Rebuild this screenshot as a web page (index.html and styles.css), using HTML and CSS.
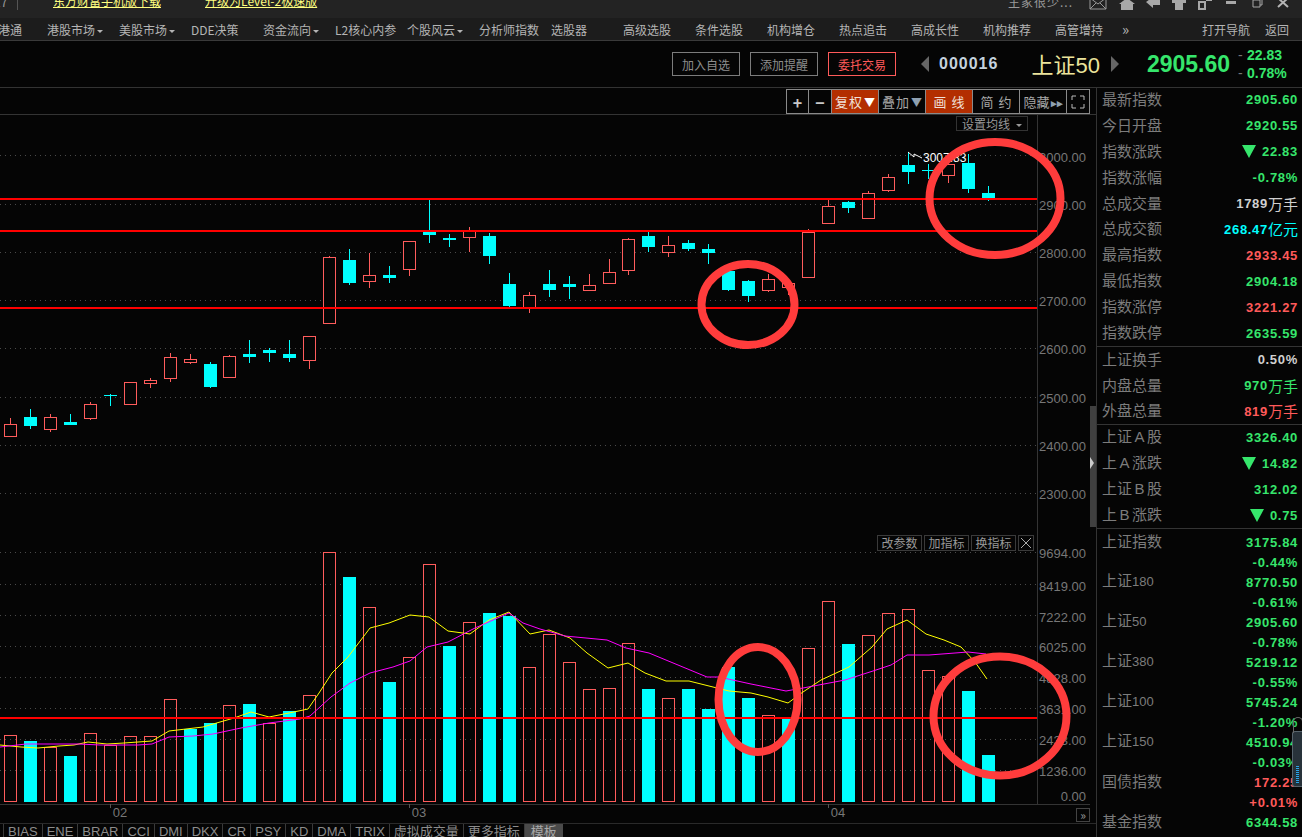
FILE: index.html
```html
<!DOCTYPE html>
<html lang="zh-CN">
<head>
    <meta charset="UTF-8">
    <title>上证50</title>
    <link rel="stylesheet" href="styles.css">
</head>
<body>
    <div class="topbar">
        <span class="topbar-stub">17</span>
        <a class="promo promo-first" href="#">东方财富手机版下载</a>
        <a class="promo promo-second" href="#">升级为Level-2极速版</a>
        <span class="user-name">主家很少...</span>
        <div class="win-icons">
            <svg class="win-icon win-icon-mail" viewBox="0 0 26 12"><path d="M5 0h16v11H5zM5 0l8 6 8-6M5 11l6-6M21 11l-6-6" fill="none" stroke="#9a9a9a"/></svg>
            <svg class="win-icon" viewBox="0 0 26 12"><path d="M13 0l8 6h-2v6H7V6H5z" fill="#a8a8a8"/></svg>
            <svg class="win-icon" viewBox="0 0 26 12"><path d="M6 4l7-5v3h7v5h-7v3z" fill="#a8a8a8"/></svg>
            <svg class="win-icon" viewBox="0 0 26 12"><path d="M6 0h14v5h-3v7H9V5H6z" fill="#a8a8a8"/></svg>
            <svg class="win-icon" viewBox="0 0 26 12"><path d="M7 4h6v7H7zM15 0h4v2h-4z" fill="none" stroke="#a8a8a8" stroke-width="2"/></svg>
            <svg class="win-icon" viewBox="0 0 26 12"><rect x="8" y="3" width="10" height="3" fill="#a8a8a8"/></svg>
            <svg class="win-icon" viewBox="0 0 26 12"><path d="M9 2h7v7H9zM11 2V0h7v7h-2" fill="none" stroke="#a8a8a8"/></svg>
            <svg class="win-icon" viewBox="0 0 26 12"><path d="M8 0l10 9M18 0L8 9" stroke="#b4b4b4" stroke-width="2"/></svg>
        </div>
    </div>

    <nav class="navbar">
        <a class="nav-item nav-first" href="#">沪港通</a>
        <a class="nav-item has-caret" href="#">港股市场</a>
        <a class="nav-item has-caret" href="#">美股市场</a>
        <a class="nav-item" href="#">DDE决策</a>
        <a class="nav-item has-caret" href="#">资金流向</a>
        <a class="nav-item" href="#">L2核心内参</a>
        <a class="nav-item has-caret" href="#">个股风云</a>
        <a class="nav-item" href="#">分析师指数</a>
        <a class="nav-item" href="#">选股器</a>
        <a class="nav-item" href="#">高级选股</a>
        <a class="nav-item" href="#">条件选股</a>
        <a class="nav-item" href="#">机构增仓</a>
        <a class="nav-item" href="#">热点追击</a>
        <a class="nav-item" href="#">高成长性</a>
        <a class="nav-item" href="#">机构推荐</a>
        <a class="nav-item" href="#">高管增持</a>
        <span class="nav-more">»</span>
        <a class="nav-side nav-open" href="#">打开导航</a>
        <a class="nav-side nav-back" href="#">返回</a>
    </nav>

    <header class="quotebar">
        <button class="quote-btn">加入自选</button>
        <button class="quote-btn">添加提醒</button>
        <button class="quote-btn quote-btn-trade">委托交易</button>
        <span class="quote-arrow quote-arrow-left"></span>
        <span class="quote-code">000016</span>
        <span class="quote-name">上证<span class="quote-name-num">50</span></span>
        <span class="quote-arrow quote-arrow-right"></span>
        <span class="quote-price">2905.60</span>
        <div class="quote-change">
            <div><i>-</i>22.83</div>
            <div><i>-</i>0.78%</div>
        </div>
    </header>

    <main class="workspace">
        <section class="chart-col">
            <div class="toolbar">
                <button class="tool-btn tool-sq">+</button>
                <button class="tool-btn tool-sq">−</button>
                <button class="tool-btn tool-on">复权<b>▼</b></button>
                <button class="tool-btn">叠加<b class="tool-tri">▼</b></button>
                <button class="tool-btn tool-on tool-spaced">画线</button>
                <button class="tool-btn tool-spaced">简约</button>
                <button class="tool-btn tool-hide">隐藏<b class="tool-tri">▸▸</b></button>
                <button class="tool-btn tool-sq">
                    <svg width="14" height="14" viewBox="0 0 14 14"><path d="M1 5V1h4M9 1h4v4M13 9v4H9M5 13H1V9" fill="none" stroke="#bbb"/></svg>
                </button>
            </div>

            <div class="kline-wrap">
                <svg id="kline" class="chart" width="1090" height="418" viewBox="0 115 1090 418"></svg>
                <button class="ma-btn">设置均线<i></i></button>
            </div>

            <div class="volume-wrap">
                <svg id="volume" class="chart" width="1090" height="290" viewBox="0 533 1090 290"></svg>
                <div class="vol-tools">
                    <button class="vol-btn">改参数</button>
                    <button class="vol-btn">加指标</button>
                    <button class="vol-btn">换指标</button>
                    <button class="vol-btn vol-close">
                        <svg width="10" height="10" viewBox="0 0 10 10"><path d="M0 0l10 10M10 0L0 10" stroke="#aaa"/></svg>
                    </button>
                </div>
                <button class="page-btn">»</button>
            </div>

            <div class="tabs">
                <span class="tab">BIAS</span>
                <span class="tab">ENE</span>
                <span class="tab">BRAR</span>
                <span class="tab">CCI</span>
                <span class="tab">DMI</span>
                <span class="tab">DKX</span>
                <span class="tab">CR</span>
                <span class="tab">PSY</span>
                <span class="tab">KD</span>
                <span class="tab">DMA</span>
                <span class="tab">TRIX</span>
                <span class="tab">虚拟成交量</span>
                <span class="tab">更多指标</span>
                <span class="tab tab-active">模板</span>
            </div>

            <div class="split-thumb"></div>
        </section>

        <aside class="panel">
            <div class="panel-sec sec-index">
                <div class="row"><span>最新指数</span><b class="up">2905.60</b></div>
                <div class="row"><span>今日开盘</span><b class="up">2920.55</b></div>
                <div class="row"><span>指数涨跌</span><b class="up"><i class="tri"></i>22.83</b></div>
                <div class="row"><span>指数涨幅</span><b class="up">-0.78%</b></div>
                <div class="row"><span>总成交量</span><b class="plain">1789<em>万手</em></b></div>
                <div class="row"><span>总成交额</span><b class="cyan">268.47<em>亿元</em></b></div>
                <div class="row"><span>最高指数</span><b class="down">2933.45</b></div>
                <div class="row"><span>最低指数</span><b class="up">2904.18</b></div>
                <div class="row"><span>指数涨停</span><b class="down">3221.27</b></div>
                <div class="row"><span>指数跌停</span><b class="up">2635.59</b></div>
            </div>
            <div class="panel-sec sec-turnover">
                <div class="row"><span>上证换手</span><b class="plain">0.50%</b></div>
                <div class="row"><span>内盘总量</span><b class="up">970<em>万手</em></b></div>
                <div class="row"><span>外盘总量</span><b class="down">819<em>万手</em></b></div>
            </div>
            <div class="panel-sec sec-shares">
                <div class="row"><span>上证<u class="wide">A</u>股</span><b class="up">3326.40</b></div>
                <div class="row"><span>上<u class="wide">A</u>涨跌</span><b class="up"><i class="tri"></i>14.82</b></div>
                <div class="row"><span>上证<u class="wide">B</u>股</span><b class="up">312.02</b></div>
                <div class="row"><span>上<u class="wide">B</u>涨跌</span><b class="up"><i class="tri"></i>0.75</b></div>
            </div>
            <div class="panel-sec sec-list">
                <div class="row"><span>上证指数</span><b class="up">3175.84</b></div>
                <div class="row"><span></span><b class="up">-0.44%</b></div>
                <div class="row"><span>上证<small>180</small></span><b class="up">8770.50</b></div>
                <div class="row"><span></span><b class="up">-0.61%</b></div>
                <div class="row"><span>上证<small>50</small></span><b class="up">2905.60</b></div>
                <div class="row"><span></span><b class="up">-0.78%</b></div>
                <div class="row"><span>上证<small>380</small></span><b class="up">5219.12</b></div>
                <div class="row"><span></span><b class="up">-0.55%</b></div>
                <div class="row"><span>上证<small>100</small></span><b class="up">5745.24</b></div>
                <div class="row"><span></span><b class="up">-1.20%</b></div>
                <div class="row"><span>上证<small>150</small></span><b class="up">4510.94</b></div>
                <div class="row"><span></span><b class="up">-0.03%</b></div>
                <div class="row"><span>国债指数</span><b class="down">172.25</b></div>
                <div class="row"><span></span><b class="down">+0.01%</b></div>
                <div class="row"><span>基金指数</span><b class="up">6344.58</b></div>
            </div>
            <div class="meter"><div class="meter-level"></div></div>
        </aside>
    </main>

    <script src="script.js"></script>
</body>
</html>
```

FILE: styles.css
```css
:root {
    --bg: #050505;
    --line: #343434;
    --label: #7c7c7c;
    --up: #36e66c;
    --down: #ff5a5a;
    --cyan: #00ffff;
    --orange: #b32e00;
    --cjk: "Noto Sans CJK SC", "Liberation Sans", sans-serif;
    --num: "Liberation Sans", "Noto Sans CJK SC", sans-serif;
}

* {
    margin: 0;
    padding: 0;
    box-sizing: border-box;
}

html, body {
    width: 1302px;
    height: 837px;
    overflow: hidden;
}

body {
    background: var(--bg);
    color: #999;
    font-family: var(--cjk);
}

a {
    color: inherit;
    text-decoration: none;
}

button {
    background: none;
    border: none;
    color: inherit;
    font-family: inherit;
}

/* top strip, its content is cut off by the window edge */
.topbar {
    display: flex;
    align-items: flex-start;
    height: 18px;
    background: #232323;
    overflow: hidden;
}

.topbar-stub {
    width: 24px;
    margin-top: -7px;
    margin-left: -6px;
    font-size: 12px;
    border-right: 1px solid #555;
}

.promo {
    margin-top: -7px;
    color: #ffff80;
    font-size: 12px;
    line-height: 16px;
    text-decoration: underline;
    white-space: nowrap;
}

.promo-first {
    margin-left: 35px;
}

.promo-second {
    margin-left: 44px;
}

.user-name {
    margin-top: -6px;
    margin-left: auto;
    margin-right: 12px;
    font-size: 12px;
    line-height: 16px;
    letter-spacing: 1px;
}

.win-icons {
    display: flex;
    padding-right: 6px;
    margin-top: -2px;
}

.win-icon {
    width: 26px;
    height: 12px;
}

.win-icon-mail {
    margin-right: 3px;
}

.navbar {
    display: flex;
    align-items: center;
    height: 23px;
    margin-left: -25px;
    width: 1327px;
    background: #1c1c1c;
    border-bottom: 1px solid #3a3a3a;
    font-size: 12px;
    color: #b4b4b4;
    white-space: nowrap;
}

.nav-item {
    width: 72px;
    flex: none;
}

.nav-first {
    padding-left: 11px;
}

.has-caret::after {
    content: "";
    display: inline-block;
    margin-left: 2px;
    vertical-align: 2px;
    border: 3px solid transparent;
    border-top: 3px solid #b4b4b4;
    border-bottom: 0;
}

.nav-more {
    margin-left: -5px;
    font-size: 15px;
    line-height: 18px;
}

.nav-side {
    flex: none;
}

.nav-open {
    margin-left: auto;
}

.nav-back {
    margin-left: 15px;
    margin-right: 13px;
}

.quotebar {
    display: flex;
    align-items: center;
    height: 47px;
    padding-left: 672px;
    border-bottom: 1px solid #333;
    white-space: nowrap;
}

.quote-btn {
    width: 68px;
    height: 24px;
    margin-right: 10px;
    border: 1px solid #7c7c7c;
    color: #8e8e8e;
    font-size: 12px;
}

.quote-btn-trade {
    margin-right: 0;
    border-color: #ff5a5a;
    color: #ff5a5a;
}

.quote-arrow {
    width: 0;
    height: 0;
    border-top: 8px solid transparent;
    border-bottom: 8px solid transparent;
}

.quote-arrow-left {
    margin-left: 25px;
    border-right: 8px solid #666;
}

.quote-arrow-right {
    margin-left: 11px;
    border-left: 8px solid #666;
}

.quote-code {
    margin-left: 10px;
    color: #c4d2de;
    font-family: var(--num);
    font-size: 16px;
    font-weight: 700;
    letter-spacing: 1px;
}

.quote-name {
    margin-left: 33px;
    color: #ece49c;
    font-size: 22px;
    line-height: 26px;
}

.quote-name-num {
    font-family: var(--num);
}

.quote-price {
    margin-left: 28px;
    color: var(--up);
    font-family: var(--num);
    font-size: 23px;
    font-weight: 700;
}

.quote-change {
    margin-left: 8px;
    color: var(--up);
    font-family: var(--num);
    font-size: 14px;
    font-weight: 700;
    line-height: 18px;
}

.quote-change i {
    display: inline-block;
    width: 9px;
    color: #777;
    font-style: normal;
    font-weight: 400;
}

.workspace {
    display: grid;
    grid-template-columns: 1097px 205px;
    height: 749px;
}

.chart-col {
    position: relative;
    border-right: 1px solid var(--line);
}

.toolbar {
    display: flex;
    justify-content: flex-end;
    height: 27px;
    padding-top: 1px;
    padding-right: 6px;
    border-bottom: 1px solid var(--line);
}

.tool-btn {
    display: flex;
    align-items: center;
    justify-content: center;
    width: 47px;
    height: 25px;
    border: 1px solid #8a8a8a;
    border-left-width: 0;
    font-size: 13px;
    letter-spacing: 1px;
    color: #a8a8a8;
    white-space: nowrap;
}

.tool-btn b {
    margin-left: 1px;
    font-size: 11px;
    letter-spacing: 0;
    color: #fff;
}

.tool-btn .tool-tri {
    color: #8fa0b0;
}

.tool-hide {
    letter-spacing: 0;
}

.tool-sq {
    width: 23px;
    letter-spacing: 0;
    color: #c8c8c8;
    font-size: 16px;
    font-weight: 700;
}

.tool-sq:first-child {
    border-left-width: 1px;
}

.tool-on {
    background: var(--orange);
    color: #f0e0d8;
}

.tool-spaced {
    letter-spacing: 5px;
    padding-left: 5px;
}

.kline-wrap, .volume-wrap {
    position: relative;
}

.kline-wrap {
    height: 418px;
}

.volume-wrap {
    height: 290px;
}

.chart {
    display: block;
    overflow: hidden;
}

.ma-btn {
    position: absolute;
    left: 956px;
    top: 1px;
    width: 72px;
    height: 15px;
    border: 1px solid #333;
    background: var(--bg);
    color: #999;
    font-size: 12px;
    line-height: 13px;
}

.ma-btn i {
    display: inline-block;
    margin-left: 6px;
    vertical-align: 2px;
    border: 3px solid transparent;
    border-top: 3px solid #999;
    border-bottom: 0;
}

.vol-tools {
    position: absolute;
    top: 2px;
    left: 877px;
    display: flex;
    gap: 2px;
}

.vol-btn {
    display: flex;
    align-items: center;
    justify-content: center;
    width: 45px;
    height: 16px;
    border: 1px solid #3a3a3a;
    color: #999;
    font-size: 12px;
    line-height: 14px;
    white-space: nowrap;
}

.vol-close {
    width: 16px;
}

.page-btn {
    position: absolute;
    left: 1076px;
    top: 275px;
    width: 14px;
    height: 14px;
    border: 1px solid #444;
    color: #999;
    font-size: 12px;
    line-height: 10px;
}

.tabs {
    display: flex;
    height: 14px;
    padding-left: 3px;
    border-top: 1px solid #2a2a2a;
    overflow: hidden;
    font-family: var(--num);
    font-size: 13px;
    line-height: 16px;
}

.tab {
    padding: 0 4px;
    border-left: 1px solid #3a3a3a;
    color: #8c8c8c;
    white-space: nowrap;
}

.tab-active {
    background: #4a4a4a;
    color: #a8a8a8;
    padding: 0 6px;
}

.split-thumb {
    position: absolute;
    left: 1090px;
    top: 318px;
    width: 6px;
    height: 121px;
    background: #404040;
}

.split-thumb::after {
    content: "";
    position: absolute;
    left: 0;
    top: 51px;
    border-left: 4px solid #ccc;
    border-top: 6px solid transparent;
    border-bottom: 6px solid transparent;
}

.panel {
    position: relative;
    margin-top: -1px;
    font-size: 15px;
}

.panel-sec {
    display: flex;
    flex-direction: column;
    padding: 0 4px 0 5px;
    border-bottom: 1px solid var(--line);
}

.sec-index {
    height: 260px;
}

.sec-turnover {
    height: 78px;
}

.sec-shares {
    height: 104px;
}

.sec-list {
    padding-top: 3px;
    border-bottom: 0;
}

.sec-index .row, .sec-turnover .row, .sec-shares .row {
    flex: 1;
}

.sec-list .row {
    height: 20px;
}

.row {
    display: flex;
    align-items: center;
    justify-content: space-between;
    color: var(--label);
    white-space: nowrap;
}

.row span {
    margin-top: -2px;
    line-height: 20px;
}

.row small {
    font-family: var(--num);
    font-size: 13px;
}

.row .wide {
    display: inline-block;
    width: 15px;
    font-family: var(--num);
    text-align: center;
    text-decoration: none;
}

.row b {
    display: flex;
    align-items: center;
    font-family: var(--num);
    font-size: 13px;
    font-weight: 700;
    letter-spacing: 0.7px;
}

.row em {
    font-family: var(--cjk);
    font-size: 15px;
    font-style: normal;
    font-weight: 400;
    letter-spacing: 0;
    line-height: 18px;
}

.tri {
    width: 0;
    height: 0;
    margin-right: 6px;
    border-left: 7px solid transparent;
    border-right: 7px solid transparent;
    border-top: 13px solid var(--up);
}

.up {
    color: var(--up);
}

.down {
    color: var(--down);
}

.cyan {
    color: var(--cyan);
}

.plain {
    color: #d0d0d0;
}

/* floating widget stuck on the window edge */
.meter {
    position: absolute;
    right: 0;
    top: 644px;
    width: 10px;
    height: 56px;
    border: 1px solid #56636c;
    border-right: 0;
    border-radius: 3px 0 0 3px;
    background: #28323a;
    padding: 4px 3px 2px;
    display: flex;
    align-items: flex-end;
}

.meter::before {
    content: "";
    position: absolute;
    left: 0;
    top: -15px;
    width: 8px;
    height: 15px;
    border: 1px solid #666;
    border-bottom: 0;
    border-radius: 5px 5px 0 0;
}

.meter-level {
    width: 4px;
    height: 18px;
    background: repeating-linear-gradient(#2ea4e8 0 1px, #14323f 1px 2px);
}
```

FILE: script.js
```js
// candle data in page pixels: [body top, body bottom, wick top, wick bottom]
const candles = [
    [424, 436, 418, 436], [417, 426, 409, 429], [417, 429, 414, 432], [422, 425, 414, 425],
    [404, 418, 402, 420], [395, 396, 394, 406], [382, 404, 382, 404], [380, 383, 378, 388],
    [357, 378, 353, 382], [359, 362, 354, 364], [364, 387, 362, 388], [356, 377, 355, 377],
    [354, 357, 340, 363], [350, 353, 348, 362], [354, 358, 340, 362], [336, 360, 336, 369],
    [257, 323, 256, 323], [260, 283, 249, 285], [275, 281, 253, 288], [275, 278, 266, 283],
    [241, 269, 241, 276], [231, 235, 199, 243], [238, 240, 234, 247], [231, 237, 227, 252],
    [236, 256, 233, 264], [284, 306, 273, 307], [295, 307, 292, 313], [284, 290, 270, 297],
    [284, 287, 276, 299], [285, 290, 274, 291], [272, 283, 259, 283], [239, 270, 238, 275],
    [236, 247, 232, 252], [245, 252, 236, 257], [243, 249, 240, 251], [249, 253, 244, 264],
    [271, 290, 271, 291], [281, 296, 280, 302], [279, 290, 274, 292], [283, 287, 283, 295],
    [232, 277, 229, 277], [206, 223, 200, 223], [202, 208, 201, 213], [193, 218, 191, 219],
    [177, 190, 174, 192], [165, 172, 152, 184], [170, 171, 164, 179], [164, 175, 159, 183],
    [163, 189, 154, 193], [193, 198, 186, 201]
];
// c = falling (cyan), r = rising (red)
const candleKinds = 'rcrcrcrrrrcrcccr' + 'rcrcrccrcc' + 'rccrrr' + 'crccccrrrr' + 'crrcc' + 'rcc';

const volTops = [735, 741, 747, 756, 733, 745, 736, 736, 699, 729, 723, 705, 704, 723, 711, 695,
    552, 577, 607, 682, 657, 564, 646, 622, 613, 616, 667, 634, 662, 689, 688, 643,
    689, 698, 689, 709, 667, 698, 715, 719, 648, 601, 644, 635, 613, 609, 670, 676, 691, 755];
const volKinds = 'rcrcrrrrrccrcrcr' + 'rcrcrr' + 'crcc' + 'rrrrrr' + 'cr' + 'cccc' + 'rc' + 'rrc' + 'rrrrr' + 'cc';

const yellowLine = '0,745 21,747 38,748 59,746 74,745 88,742 107,744 124,743 152,741 169,731 186,729 203,727 220,722 234,718 251,712 269,717 289,713 308,709 319,693 332,673 348,657 370,628 389,623 410,615 429,617 448,631 470,634 489,620 509,612 530,634 549,630 570,638 587,653 608,668 628,663 645,673 666,681 689,681 729,691 751,693 768,697 788,703 803,692 821,680 849,667 872,647 887,629 907,620 926,634 944,640 961,647 975,662 987,679';
const pinkLine = '0,747 26,744 79,744 100,745 138,745 152,744 169,737 193,736 213,734 241,728 269,723 300,719 310,716 331,697 350,683 370,673 393,667 410,661 427,647 448,642 475,628 509,613 523,623 540,629 565,636 607,640 626,648 649,653 707,677 719,677 751,684 786,691 803,688 845,680 873,671 891,665 907,655 929,655 968,652 986,654';

const RED = '#ff5c5c';
const CYAN = '#00ffff';

function centerX(i) {
    return Math.round(10 + 19.95 * i);
}

function hLine(y, x2, color, width, dash) {
    const dashAttr = dash ? ' stroke-dasharray="1 4"' : '';
    return `<line x1="0" y1="${y}" x2="${x2}" y2="${y}" stroke="${color}" stroke-width="${width}"${dashAttr} shape-rendering="crispEdges"/>`;
}

function axisLabel(y, text) {
    return `<text x="1086" y="${y}" text-anchor="end" fill="#777" font-family="Liberation Sans" font-size="13">${text}</text>`;
}

function ring(cx, cy, rx, ry) {
    return `<ellipse cx="${cx}" cy="${cy}" rx="${rx}" ry="${ry}" fill="none" stroke="#ff3c3c" stroke-width="8"/>`;
}

function drawKline() {
    let out = '';
    [155, 204, 252, 300, 348, 397, 445, 493].forEach(y => {
        out += hLine(y + 0.5, 1037, '#4a4a4a', 1, true);
    });

    candles.forEach((c, i) => {
        const cx = centerX(i);
        const color = candleKinds[i] === 'r' ? RED : CYAN;
        out += `<line x1="${cx + 0.5}" y1="${c[2]}" x2="${cx + 0.5}" y2="${c[3]}" stroke="${color}" shape-rendering="crispEdges"/>`;
        if (candleKinds[i] === 'r') {
            out += `<rect x="${cx - 5.5}" y="${c[0] + 0.5}" width="12" height="${c[1] - c[0]}" fill="#050505" stroke="${RED}" shape-rendering="crispEdges"/>`;
        } else {
            out += `<rect x="${cx - 6}" y="${c[0]}" width="13" height="${Math.max(c[1] - c[0], 1)}" fill="${CYAN}" shape-rendering="crispEdges"/>`;
        }
    });

    out += '<path d="M908 152l6 5 0-3 8 4" fill="none" stroke="#fff"/>';
    out += '<text x="923" y="162" fill="#fff" font-family="Liberation Sans" font-size="12">3007.83</text>';

    [199, 231, 308].forEach(y => {
        out += hLine(y, 1037, '#ff0000', 2);
    });

    out += '<line x1="1037.5" y1="115" x2="1037.5" y2="533" stroke="#343434"/>';
    out += '<line x1="1090.5" y1="115" x2="1090.5" y2="533" stroke="#2a2a2a"/>';

    [[162, '3000.00'], [210, '2900.00'], [258, '2800.00'], [306, '2700.00'],
     [354, '2600.00'], [403, '2500.00'], [451, '2400.00'], [499, '2300.00']].forEach(t => {
        out += axisLabel(t[0], t[1]);
    });

    out += ring(995, 198.5, 65.5, 56.5);
    out += ring(748, 304.5, 46.5, 40.5);
    out += hLine(533, 1090, '#343434', 1);

    document.getElementById('kline').innerHTML = out;
}

function drawVolume() {
    let out = '';
    [552, 584, 615, 646, 677, 708, 739, 770].forEach(y => {
        out += hLine(y + 0.5, 1037, '#4a4a4a', 1, true);
    });

    volTops.forEach((top, i) => {
        const cx = centerX(i);
        if (volKinds[i] === 'r') {
            out += `<rect x="${cx - 5.5}" y="${top + 0.5}" width="12" height="${801 - top}" fill="none" stroke="${RED}" shape-rendering="crispEdges"/>`;
        } else {
            out += `<rect x="${cx - 6}" y="${top}" width="13" height="${802 - top}" fill="${CYAN}" shape-rendering="crispEdges"/>`;
        }
    });

    out += `<polyline points="${yellowLine}" fill="none" stroke="#ffff00"/>`;
    out += `<polyline points="${pinkLine}" fill="none" stroke="#ff00ff"/>`;
    out += hLine(718, 1037, '#ff0000', 2);

    out += '<line x1="1037.5" y1="533" x2="1037.5" y2="804" stroke="#343434"/>';
    out += '<line x1="1090.5" y1="533" x2="1090.5" y2="823" stroke="#2a2a2a"/>';

    [[558, '9694.00'], [591, '8419.00'], [622, '7222.00'], [652, '6025.00'], [683, '4828.00'],
     [714, '3631.00'], [745, '2433.00'], [776, '1236.00'], [801, '0.00']].forEach(t => {
        out += axisLabel(t[0], t[1]);
    });

    out += ring(758, 699.5, 39.5, 52.5);
    out += ring(1000, 716, 66.5, 59.5);

    out += hLine(804.5, 1090, '#343434', 1);
    [[110, 120, '02'], [409, 419, '03'], [828, 838, '04']].forEach(t => {
        out += `<line x1="${t[0] + 0.5}" y1="804" x2="${t[0] + 0.5}" y2="808" stroke="#555"/>`;
        out += `<text x="${t[1]}" y="817" text-anchor="middle" fill="#777" font-family="Liberation Sans" font-size="13">${t[2]}</text>`;
    });

    document.getElementById('volume').innerHTML = out;
}

drawKline();
drawVolume();
```
